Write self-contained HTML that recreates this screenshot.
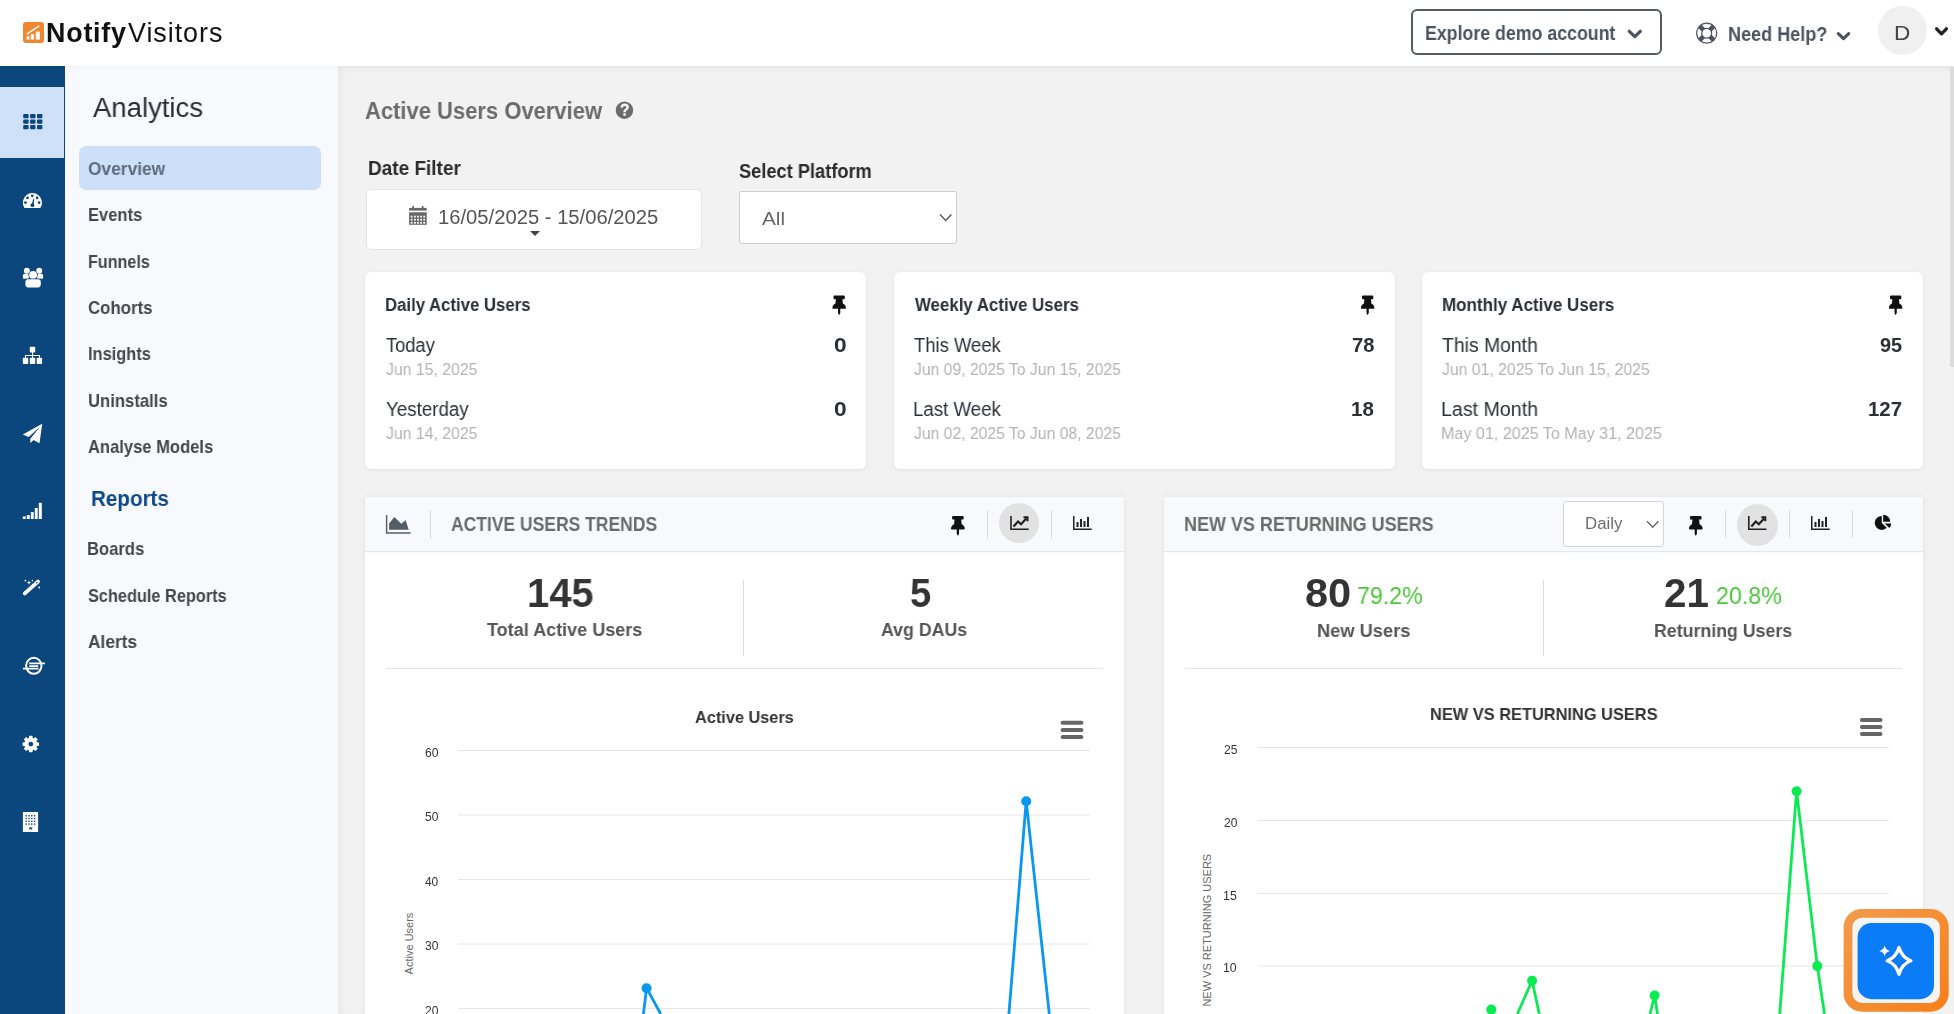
<!DOCTYPE html>
<html><head><meta charset="utf-8"><title>NotifyVisitors - Analytics</title>
<style>
*{margin:0;padding:0;box-sizing:border-box}
html,body{width:1954px;height:1014px;overflow:hidden;background:#f2f2f2;font-family:"Liberation Sans",sans-serif}
.t{position:absolute;z-index:5;will-change:transform;white-space:nowrap;transform-origin:0 0;display:inline-block}
.a{position:absolute}
#header{left:0;top:0;width:1954px;height:66px;background:#fff;z-index:2;box-shadow:0 1px 3px rgba(0,0,0,0.03)}
#sidebar{left:0;top:66px;width:65px;height:948px;background:#0b467d}
#sideactive{left:0;top:87px;width:64px;height:71px;background:#cfe0f9}
#submenu{left:65px;top:66px;width:273px;height:948px;background:#f8f9fc}
#main{left:338px;top:66px;width:1616px;height:948px;background:#f2f2f2;box-shadow:inset 3px 4px 7px rgba(0,0,0,0.04)}
#overviewbg{left:79px;top:146px;width:242px;height:44px;background:#cde0fa;border-radius:7px}
.card{position:absolute;background:#fff;border-radius:6px;box-shadow:0 1px 4px rgba(0,0,0,0.07)}
.chhead{position:absolute;left:0;top:0;right:0;height:55px;background:#f7f9fc;border-bottom:1px solid #e4e7ec;box-shadow:0 1px 2px rgba(0,0,0,0.03)}
.vdiv{position:absolute;width:1px;background:#dcdcdc}
.hdiv{position:absolute;height:1px;background:#e6e6e6}
.grid{position:absolute;height:1px;background:#e6e6e6}

</style></head><body>
<div class="a" id="header"></div>
<div class="a" id="sidebar"></div>
<div class="a" id="sideactive"></div>
<div class="a" id="submenu"></div>
<div class="a" id="main"></div>
<div class="a" id="overviewbg"></div>
<!-- explore button -->
<div class="a" style="left:1411px;top:9px;width:251px;height:46px;border:2px solid #555a63;border-radius:6px;background:#fff;z-index:3"></div>
<div class="a" style="left:1878px;top:6px;width:49px;height:49px;border-radius:50%;background:#f0f0f0;z-index:3"></div>
<!-- date box -->
<div class="a" style="left:366px;top:189px;width:336px;height:61px;background:#fff;border-radius:5px;border:1px solid #e4e4e4"></div>
<div class="a" style="left:739px;top:191px;width:218px;height:53px;background:#fff;border:1px solid #cfcfcf;border-radius:2px"></div>
<!-- KPI cards -->
<div class="card" style="left:365px;top:272px;width:501px;height:197px"></div>
<div class="card" style="left:893.5px;top:272px;width:501px;height:197px"></div>
<div class="card" style="left:1421.5px;top:272px;width:501px;height:197px"></div>
<!-- chart card 1 -->
<div class="card" style="left:364.5px;top:496.5px;width:759.5px;height:560px;border-radius:0;box-shadow:0 0 6px rgba(0,0,0,0.07)">
  <div class="chhead"></div>
</div>
<div class="vdiv" style="left:430px;top:510px;height:29px"></div>
<div class="vdiv" style="left:987px;top:510px;height:29px"></div>
<div class="a" style="left:999px;top:503px;width:40px;height:40px;border-radius:50%;background:#e2e2e2"></div>
<div class="vdiv" style="left:1051px;top:510px;height:29px"></div>
<div class="vdiv" style="left:743px;top:580px;height:76px"></div>
<div class="hdiv" style="left:386px;top:668px;width:717px"></div>
<!-- chart card 2 -->
<div class="card" style="left:1164.2px;top:496.5px;width:759.3px;height:560px;border-radius:0;box-shadow:0 0 6px rgba(0,0,0,0.07)">
  <div class="chhead"></div>
</div>
<div class="a" style="left:1562.5px;top:501px;width:101.5px;height:45.5px;border:1px solid #d4d4d4;border-radius:3px;background:#fff"></div>
<div class="vdiv" style="left:1725px;top:510px;height:28px"></div>
<div class="a" style="left:1737px;top:504px;width:41px;height:42px;border-radius:50%;background:#e2e2e2"></div>
<div class="vdiv" style="left:1789px;top:510px;height:28px"></div>
<div class="vdiv" style="left:1852px;top:510px;height:28px"></div>
<div class="vdiv" style="left:1543px;top:580px;height:76px"></div>
<div class="hdiv" style="left:1185px;top:668px;width:717px"></div>
<!-- scrollbar -->
<div class="a" style="left:1950px;top:67px;width:4px;height:300px;background:#dcdcdc;z-index:3"></div>

<svg class="a" style="left:0;top:0;z-index:4;pointer-events:none" width="1954" height="1014" viewBox="0 0 1954 1014">
<!-- logo -->
<rect x="23" y="22" width="21" height="21" rx="3" fill="#f0862f"/>
<rect x="26.6" y="36.2" width="2.8" height="3.4" fill="#fff"/>
<rect x="30.8" y="34.2" width="3.3" height="5.4" fill="#fff"/>
<rect x="35.8" y="31.6" width="4" height="8" fill="#fff"/>
<path d="M26.8 34.2 L39.2 25.8" stroke="#fff" stroke-width="1.5" fill="none"/>
<!-- header chevrons -->
<path d="M1629.3 31.3 L1634.8 36.6 L1640.3 31.3" stroke="#4b5360" stroke-width="3.2" fill="none" stroke-linecap="round" stroke-linejoin="round"/>
<path d="M1838.3 33.6 L1843.5 38.6 L1848.7 33.6" stroke="#4b5360" stroke-width="3.2" fill="none" stroke-linecap="round" stroke-linejoin="round"/>
<path d="M1936.6 28.8 L1941.5 33.8 L1946.4 28.8" stroke="#222" stroke-width="3.3" fill="none" stroke-linecap="round" stroke-linejoin="round"/>
<!-- lifebuoy -->
<g transform="translate(1706.7 33.2)">
<circle r="10.6" fill="#4b5360"/>
<circle r="9.4" fill="#fff"/>
<path d="M-7 -7 L7 7 M-7 7 L7 -7" stroke="#4b5360" stroke-width="4.6"/>
<circle r="5.5" fill="#4b5360"/>
<circle r="4.3" fill="#fff"/>
</g>
<!-- sidebar icons -->
<g fill="#0b467d">
<rect x="23.2" y="114" width="5.4" height="4.2" rx="1"/><rect x="30.1" y="114" width="5.4" height="4.2" rx="1"/><rect x="37" y="114" width="5.4" height="4.2" rx="1"/>
<rect x="23.2" y="119.5" width="5.4" height="4.2" rx="1"/><rect x="30.1" y="119.5" width="5.4" height="4.2" rx="1"/><rect x="37" y="119.5" width="5.4" height="4.2" rx="1"/>
<rect x="23.2" y="125" width="5.4" height="4.2" rx="1"/><rect x="30.1" y="125" width="5.4" height="4.2" rx="1"/><rect x="37" y="125" width="5.4" height="4.2" rx="1"/>
</g>
<g fill="#fff">
<!-- gauge -->
<path d="M24.5 208.1 A9.6 9.6 0 1 1 40.3 208.1 Z"/>
<g fill="#0b467d"><circle cx="25.5" cy="202.6" r="1.35"/><circle cx="27.5" cy="197.9" r="1.35"/><circle cx="32.2" cy="195.8" r="1.35"/><circle cx="37.1" cy="197.9" r="1.35"/><circle cx="39.1" cy="202.6" r="1.35"/>
<path d="M31.6 205 L33.2 199 L34.3 199.3 L33.4 205.4 Z"/><circle cx="32.4" cy="205.2" r="1.9"/></g>
<!-- users -->
<circle cx="26.9" cy="270.7" r="3"/><circle cx="39.2" cy="270.7" r="3"/>
<rect x="22.9" y="273.8" width="6" height="5.2" rx="1.6"/><rect x="37.1" y="273.8" width="6" height="5.2" rx="1.6"/>
<circle cx="33.1" cy="275" r="4.6" fill="#0b467d"/><circle cx="33.1" cy="275" r="3.9"/>
<rect x="24.6" y="278.6" width="17" height="9.6" rx="0" fill="#0b467d"/>
<rect x="25.4" y="279.3" width="15.4" height="8.1" rx="2.8"/>
<!-- sitemap -->
<rect x="29.8" y="346.8" width="5.4" height="5.8" rx="0.8"/>
<rect x="22.8" y="357.8" width="5.4" height="6.3" rx="0.8"/><rect x="29.8" y="357.8" width="5.4" height="6.3" rx="0.8"/><rect x="36.7" y="357.8" width="5.4" height="6.3" rx="0.8"/>
<rect x="32" y="352" width="1" height="6"/><rect x="25" y="355" width="15" height="1"/><rect x="25" y="355" width="1" height="3"/><rect x="39" y="355" width="1" height="3"/>
<!-- paper plane -->
<path d="M22.8 434.5 L42.2 423.8 L39.5 443.2 L33.5 440 L30.5 443 L30.2 439 L40.2 426.5 L28.8 437 Z"/>
<!-- signal bars -->
<rect x="22.8" y="516.4" width="2.9" height="2.6"/><rect x="26.8" y="515.1" width="2.9" height="3.9"/><rect x="30.8" y="512.1" width="2.9" height="6.9"/><rect x="34.8" y="508" width="2.9" height="11"/><rect x="38.8" y="502.8" width="3" height="16.2"/>
<!-- magic wand -->
<path d="M24.8 593.4 L38 581.6" stroke="#fff" stroke-width="3.8" stroke-linecap="round"/>
<path d="M36.3 583.2 L37.5 582.1" stroke="#0b467d" stroke-width="1.2"/>
<circle cx="25.4" cy="580.6" r="0.9"/><circle cx="32.4" cy="580.6" r="0.8"/><circle cx="39.2" cy="587.5" r="0.9"/>
<path d="M29 580.6 L29.6 582.1 L31.1 582.7 L29.6 583.3 L29 584.8 L28.4 583.3 L26.9 582.7 L28.4 582.1 Z"/>
<!-- gear -->
<path d="M36.71 741.65 L36.91 742.21 L39.03 742.43 L39.03 745.77 L36.91 745.99 L36.71 746.55 L36.46 747.09 L37.80 748.74 L35.44 751.10 L33.79 749.76 L33.25 750.01 L32.69 750.21 L32.47 752.33 L29.13 752.33 L28.91 750.21 L28.35 750.01 L27.81 749.76 L26.16 751.10 L23.80 748.74 L25.14 747.09 L24.89 746.55 L24.69 745.99 L22.57 745.77 L22.57 742.43 L24.69 742.21 L24.89 741.65 L25.14 741.11 L23.80 739.46 L26.16 737.10 L27.81 738.44 L28.35 738.19 L28.91 737.99 L29.13 735.87 L32.47 735.87 L32.69 737.99 L33.25 738.19 L33.79 738.44 L35.44 737.10 L37.80 739.46 L36.46 741.11 Z"/>
<circle cx="30.8" cy="744.1" r="2.4" fill="#0b467d"/>
<!-- building -->
<rect x="22.9" y="812" width="15.2" height="20"/>
<g fill="#0b467d"><rect x="25.5" y="815.0" width="1.4" height="1.4"/><rect x="25.5" y="817.8" width="1.4" height="1.4"/><rect x="25.5" y="820.6" width="1.4" height="1.4"/><rect x="25.5" y="823.4" width="1.4" height="1.4"/><rect x="28.3" y="815.0" width="1.4" height="1.4"/><rect x="28.3" y="817.8" width="1.4" height="1.4"/><rect x="28.3" y="820.6" width="1.4" height="1.4"/><rect x="28.3" y="823.4" width="1.4" height="1.4"/><rect x="31.1" y="815.0" width="1.4" height="1.4"/><rect x="31.1" y="817.8" width="1.4" height="1.4"/><rect x="31.1" y="820.6" width="1.4" height="1.4"/><rect x="31.1" y="823.4" width="1.4" height="1.4"/><rect x="33.9" y="815.0" width="1.4" height="1.4"/><rect x="33.9" y="817.8" width="1.4" height="1.4"/><rect x="33.9" y="820.6" width="1.4" height="1.4"/><rect x="33.9" y="823.4" width="1.4" height="1.4"/>
<rect x="29.2" y="827.4" width="3" height="2"/>
</g>
</g>
<!-- globe/ring icon -->
<g fill="none" stroke="#fff">
<ellipse cx="33.8" cy="665.8" rx="7.7" ry="8" stroke-width="2"/>
<path d="M29.1 663.3 H44.9 M29.3 666.1 H38.2 M22.9 668.6 H38.5" stroke-width="1.7"/>
</g>
<!-- help icon -->
<circle cx="624.45" cy="110.2" r="8.7" fill="#6b6b6b"/>
<path d="M621.6 107.6 Q621.9 104.8 624.7 104.8 Q627.6 104.8 627.6 107.3 Q627.6 109 625.6 110 Q624.6 110.6 624.6 112.2" fill="none" stroke="#f2f2f2" stroke-width="2.5"/>
<rect x="623.3" y="113.3" width="2.6" height="2.4" fill="#f2f2f2"/>
<!-- calendar -->
<g fill="#666">
<rect x="409.1" y="207.9" width="17.6" height="2.7"/>
<rect x="412.3" y="206" width="1.7" height="2.5"/><rect x="421.8" y="206" width="1.7" height="2.5"/>
<rect x="409.1" y="212.3" width="17.6" height="12.5"/>
</g>
<g fill="#fff"><rect x="410.7" y="215.7" width="1.8" height="1.8"/><rect x="410.7" y="218.8" width="1.8" height="1.8"/><rect x="410.7" y="221.9" width="1.8" height="1.8"/><rect x="414.0" y="215.7" width="1.8" height="1.8"/><rect x="414.0" y="218.8" width="1.8" height="1.8"/><rect x="414.0" y="221.9" width="1.8" height="1.8"/><rect x="417.1" y="215.7" width="1.8" height="1.8"/><rect x="417.1" y="218.8" width="1.8" height="1.8"/><rect x="417.1" y="221.9" width="1.8" height="1.8"/><rect x="420.2" y="215.7" width="1.8" height="1.8"/><rect x="420.2" y="218.8" width="1.8" height="1.8"/><rect x="420.2" y="221.9" width="1.8" height="1.8"/><rect x="423.3" y="215.7" width="1.8" height="1.8"/><rect x="423.3" y="218.8" width="1.8" height="1.8"/><rect x="423.3" y="221.9" width="1.8" height="1.8"/></g>
<path d="M530 231 L540 231 L535 236 Z" fill="#444"/>
<path d="M940 214.5 L945.7 220.5 L951.4 214.5" stroke="#555" stroke-width="1.4" fill="none"/>
<path d="M1647 521.2 L1652.7 527.3 L1658.4 521.2" stroke="#666" stroke-width="1.4" fill="none"/>
<!-- pins -->
<defs>
<path id="pin" d="M298.028 214.267L285.793 96H328c13.255 0 24-10.745 24-24V24c0-13.255-10.745-24-24-24H56C42.745 0 32 10.745 32 24v48c0 13.255 10.745 24 24 24h42.207L85.972 214.267C37.465 236.82 0 277.261 0 328c0 13.255 10.745 24 24 24h136v104.007c0 1.242.289 2.467.845 3.578l24 48c2.941 5.882 11.364 5.893 14.311 0l24-48a8.008 8.008 0 0 0 .845-3.578V352h136c13.255 0 24-10.745 24-24-.001-51.183-37.983-91.42-85.973-113.733z"/>
</defs>
<g fill="#111">
<use href="#pin" transform="translate(832.4 295.5) scale(0.0352 0.0379)"/>
<use href="#pin" transform="translate(1360.9 295.5) scale(0.0352 0.0379)"/>
<use href="#pin" transform="translate(1888.9 295.5) scale(0.0352 0.0379)"/>
<use href="#pin" transform="translate(951 515.9) scale(0.0359 0.0387)"/>
<use href="#pin" transform="translate(1688.9 515.9) scale(0.0359 0.0387)"/>
</g>
<!-- area chart icon -->
<g fill="#555d68">
<path d="M385.9 515.1 L387.3 515.1 L387.3 532.2 L410.6 532.2 L410.6 533.7 L385.9 533.7 Z"/>
<path d="M389.1 529.8 L389.1 523.5 L394.4 517 L401.3 523.8 L405.6 520.1 L408.7 529.8 Z"/>
</g>
<!-- line chart icons -->
<g id="lc" fill="none" stroke="#222">
<path d="M1011 516 L1011 529.3 L1028.7 529.3" stroke-width="1.6"/>
<path d="M1013.5 526.5 L1018 521.5 L1021 524.2 L1026.5 518.3" stroke-width="2.2"/>
<path d="M1023.5 517.2 L1027.5 517.2 L1027.5 521.2" stroke-width="2"/>
</g>
<use href="#lc" transform="translate(737.8 0)"/>
<!-- bar chart icons -->
<g id="bc" fill="#222">
<path d="M1073 516 L1074.5 516 L1074.5 528.5 L1091.7 528.5 L1091.7 530 L1073 530 Z"/>
<rect x="1076.5" y="522" width="2" height="5"/><rect x="1080" y="519" width="2" height="8"/><rect x="1083.5" y="521" width="2" height="6"/><rect x="1087" y="517" width="2" height="10"/>
</g>
<use href="#bc" transform="translate(738 0)"/>
<!-- pie -->
<g fill="#111">
<path d="M1881.8 522.9 L1881.8 515.9 A7 7 0 1 0 1886.75 527.85 Z"/>
<path d="M1883.2 521.7 L1883.2 514.7 A7 7 0 0 1 1890.2 521.7 Z"/>
<path d="M1884.6 523.4 L1891.2 523.4 A6.6 6.6 0 0 1 1889.3 528.1 Z"/>
</g>
<!-- hamburgers -->
<g fill="#666">
<rect x="1060.6" y="720.7" width="22.8" height="4" rx="2"/><rect x="1060.6" y="727.9" width="22.8" height="4" rx="2"/><rect x="1060.6" y="735" width="22.8" height="4" rx="2"/>
<rect x="1859.9" y="718" width="22.6" height="4" rx="2"/><rect x="1859.9" y="725" width="22.6" height="4" rx="2"/><rect x="1859.9" y="732" width="22.6" height="4" rx="2"/>
</g>
<!-- chart 1 grid -->
<g stroke="#e6e6e6" stroke-width="1">
<path d="M458 750.5 H1090 M458 815 H1090 M458 879.5 H1090 M458 944 H1090 M458 1008.5 H1090"/>
<path d="M1257.5 747.5 H1889 M1257.5 820.5 H1889 M1257.5 893.5 H1889 M1257.5 966 H1889"/>
</g>
<text transform="translate(412.5 943.5) rotate(-90)" font-family="Liberation Sans" font-size="11" fill="#666" text-anchor="middle">Active Users</text>
<text transform="translate(1211 930.2) rotate(-90)" font-family="Liberation Sans" font-size="11" fill="#666" text-anchor="middle">NEW VS RETURNING USERS</text>
<!-- series 1 -->
<g stroke="#0898ee" stroke-width="2.8" fill="none" stroke-linejoin="round">
<path d="M643.4 1014 L646.6 988.2 L660.7 1014"/>
<path d="M1008.9 1014 L1026.2 801.2 L1049.3 1014"/>
</g>
<g fill="#0898ee"><circle cx="646.6" cy="988.2" r="5"/><circle cx="1026.2" cy="801.2" r="5"/></g>
<!-- series 2 -->
<g stroke="#0aea52" stroke-width="2.8" fill="none" stroke-linejoin="round">
<path d="M1517.3 1014 L1532.1 980.7 L1539.3 1014"/>
<path d="M1650 1014 L1654.6 995.5 L1657.5 1014"/>
<path d="M1779.7 1014 L1796.6 791.2 L1817.3 966.1 L1824.5 1014"/>
</g>
<g fill="#0aea52"><circle cx="1491.3" cy="1009.6" r="5"/><circle cx="1532.1" cy="980.7" r="5"/><circle cx="1654.6" cy="995.5" r="5"/><circle cx="1796.6" cy="791.2" r="5"/><circle cx="1817.3" cy="966.1" r="5"/></g>
<!-- AI button -->
<defs>
<linearGradient id="og" x1="0" y1="0" x2="1" y2="1"><stop offset="0" stop-color="#f39a4c"/><stop offset="1" stop-color="#f7801a"/></linearGradient>
</defs>
<rect x="1848" y="913.3" width="96.3" height="94" rx="14" fill="#f4f4f4" stroke="url(#og)" stroke-width="8.8"/>
<rect x="1857.6" y="923" width="76.4" height="76.2" rx="14" fill="#0b7cf7"/>
<path d="M1899 947.5 Q1902 957.5 1910.8 960.8 Q1902 964 1899 974.2 Q1896 964 1887.2 960.8 Q1896 957.5 1899 947.5 Z" fill="none" stroke="#fff" stroke-width="3.3" stroke-linejoin="round"/>
<path d="M1884.6 945.6 Q1885.5 950.1 1890 951 Q1885.5 951.9 1884.6 956.4 Q1883.7 951.9 1879.2 951 Q1883.7 950.1 1884.6 945.6 Z" fill="#fff"/>
</svg>

<span class="t" id="logo1" style="left:45.90px;top:19.84px;font-size:26.89px;line-height:26.89px;font-weight:700;color:#111;transform:scaleX(1.0000);letter-spacing:0.781px;">Notify</span>
<span class="t" id="logo2" style="left:128.18px;top:19.84px;font-size:26.89px;line-height:26.89px;font-weight:400;color:#111;transform:scaleX(1.0000);letter-spacing:0.966px;">Visitors</span>
<span class="t" id="explore" style="left:1424.81px;top:23.74px;font-size:19.91px;line-height:19.91px;font-weight:700;color:#4b5360;transform:scaleX(0.8918);letter-spacing:0.000px;">Explore demo account</span>
<span class="t" id="help" style="left:1727.79px;top:25.09px;font-size:19.62px;line-height:19.62px;font-weight:700;color:#4b5360;transform:scaleX(0.9200);letter-spacing:0.000px;">Need Help?</span>
<span class="t" id="avatarD" style="left:1894.15px;top:21.56px;font-size:21.08px;line-height:21.08px;font-weight:400;color:#444;transform:scaleX(1.0723);letter-spacing:0.000px;">D</span>
<span class="t" id="analytics" style="left:92.95px;top:92.73px;font-size:28.20px;line-height:28.20px;font-weight:400;color:#2b2f33;transform:scaleX(0.9756);letter-spacing:0.000px;">Analytics</span>
<span class="t" id="m0" style="left:88.19px;top:159.82px;font-size:18.17px;line-height:18.17px;font-weight:700;color:#5f6b7a;transform:scaleX(0.9558);letter-spacing:0.000px;">Overview</span>
<span class="t" id="m1" style="left:87.79px;top:206.19px;font-size:18.17px;line-height:18.17px;font-weight:700;color:#44474b;transform:scaleX(0.9099);letter-spacing:0.000px;">Events</span>
<span class="t" id="m2" style="left:87.82px;top:252.56px;font-size:18.17px;line-height:18.17px;font-weight:700;color:#44474b;transform:scaleX(0.8884);letter-spacing:0.000px;">Funnels</span>
<span class="t" id="m3" style="left:88.21px;top:298.93px;font-size:18.17px;line-height:18.17px;font-weight:700;color:#44474b;transform:scaleX(0.9265);letter-spacing:0.000px;">Cohorts</span>
<span class="t" id="m4" style="left:87.80px;top:345.30px;font-size:18.17px;line-height:18.17px;font-weight:700;color:#44474b;transform:scaleX(0.9032);letter-spacing:0.000px;">Insights</span>
<span class="t" id="m5" style="left:87.90px;top:391.67px;font-size:18.17px;line-height:18.17px;font-weight:700;color:#44474b;transform:scaleX(0.9184);letter-spacing:0.000px;">Uninstalls</span>
<span class="t" id="m6" style="left:88.49px;top:438.04px;font-size:18.17px;line-height:18.17px;font-weight:700;color:#44474b;transform:scaleX(0.9123);letter-spacing:0.000px;">Analyse Models</span>
<span class="t" id="reports" style="left:90.82px;top:487.26px;font-size:22.97px;line-height:22.97px;font-weight:700;color:#0d4a85;transform:scaleX(0.8978);letter-spacing:0.000px;">Reports</span>
<span class="t" id="r0" style="left:87.39px;top:540.32px;font-size:18.17px;line-height:18.17px;font-weight:700;color:#44474b;transform:scaleX(0.9158);letter-spacing:0.000px;">Boards</span>
<span class="t" id="r1" style="left:88.03px;top:586.72px;font-size:18.17px;line-height:18.17px;font-weight:700;color:#44474b;transform:scaleX(0.8981);letter-spacing:0.000px;">Schedule Reports</span>
<span class="t" id="r2" style="left:88.07px;top:633.07px;font-size:18.17px;line-height:18.17px;font-weight:700;color:#44474b;transform:scaleX(0.9548);letter-spacing:0.000px;">Alerts</span>
<span class="t" id="title" style="left:364.75px;top:99.18px;font-size:24.13px;line-height:24.13px;font-weight:700;color:#6b6b6b;transform:scaleX(0.9110);letter-spacing:0.000px;">Active Users Overview</span>
<span class="t" id="datefilter" style="left:368.43px;top:158.66px;font-size:19.84px;line-height:19.84px;font-weight:700;color:#2b2b2b;transform:scaleX(0.9576);letter-spacing:0.000px;">Date Filter</span>
<span class="t" id="selplat" style="left:738.77px;top:161.84px;font-size:19.62px;line-height:19.62px;font-weight:700;color:#2b2b2b;transform:scaleX(0.9299);letter-spacing:0.000px;">Select Platform</span>
<span class="t" id="daterange" style="left:438.16px;top:207.74px;font-size:19.91px;line-height:19.91px;font-weight:400;color:#555;transform:scaleX(1.0154);letter-spacing:0.000px;">16/05/2025 - 15/06/2025</span>
<span class="t" id="all" style="left:761.96px;top:209.87px;font-size:18.46px;line-height:18.46px;font-weight:400;color:#666;transform:scaleX(1.1233);letter-spacing:0.000px;">All</span>
<span class="t" id="c0h" style="left:385.18px;top:295.93px;font-size:18.75px;line-height:18.75px;font-weight:700;color:#2b2f36;transform:scaleX(0.8930);letter-spacing:0.000px;">Daily Active Users</span>
<span class="t" id="c0l1" style="left:385.89px;top:335.54px;font-size:19.91px;line-height:19.91px;font-weight:400;color:#2b2f36;transform:scaleX(0.9176);letter-spacing:0.000px;">Today</span>
<span class="t" id="c0v1" style="left:833.90px;top:335.54px;font-size:19.91px;line-height:19.91px;font-weight:700;color:#2b2f36;transform:scaleX(1.1400);letter-spacing:0.000px;">0</span>
<span class="t" id="c0d1" style="left:386.05px;top:362.33px;font-size:16.86px;line-height:16.86px;font-weight:400;color:#b3b3b3;transform:scaleX(0.9386);letter-spacing:0.000px;">Jun 15, 2025</span>
<span class="t" id="c0l2" style="left:385.89px;top:399.64px;font-size:19.91px;line-height:19.91px;font-weight:400;color:#2b2f36;transform:scaleX(0.9423);letter-spacing:0.000px;">Yesterday</span>
<span class="t" id="c0v2" style="left:833.90px;top:399.64px;font-size:19.91px;line-height:19.91px;font-weight:700;color:#2b2f36;transform:scaleX(1.1400);letter-spacing:0.000px;">0</span>
<span class="t" id="c0d2" style="left:386.05px;top:426.43px;font-size:16.86px;line-height:16.86px;font-weight:400;color:#b3b3b3;transform:scaleX(0.9386);letter-spacing:0.000px;">Jun 14, 2025</span>
<span class="t" id="c1h" style="left:914.68px;top:295.93px;font-size:18.75px;line-height:18.75px;font-weight:700;color:#2b2f36;transform:scaleX(0.8986);letter-spacing:0.000px;">Weekly Active Users</span>
<span class="t" id="c1l1" style="left:914.29px;top:335.54px;font-size:19.91px;line-height:19.91px;font-weight:400;color:#2b2f36;transform:scaleX(0.9254);letter-spacing:0.000px;">This Week</span>
<span class="t" id="c1v1" style="left:1351.84px;top:335.54px;font-size:19.91px;line-height:19.91px;font-weight:700;color:#2b2f36;transform:scaleX(1.0102);letter-spacing:0.000px;">78</span>
<span class="t" id="c1d1" style="left:914.45px;top:362.33px;font-size:16.86px;line-height:16.86px;font-weight:400;color:#b3b3b3;transform:scaleX(0.9326);letter-spacing:0.000px;">Jun 09, 2025 To Jun 15, 2025</span>
<span class="t" id="c1l2" style="left:913.17px;top:399.64px;font-size:19.91px;line-height:19.91px;font-weight:400;color:#2b2f36;transform:scaleX(0.9372);letter-spacing:0.000px;">Last Week</span>
<span class="t" id="c1v2" style="left:1351.41px;top:399.64px;font-size:19.91px;line-height:19.91px;font-weight:700;color:#2b2f36;transform:scaleX(1.0301);letter-spacing:0.000px;">18</span>
<span class="t" id="c1d2" style="left:914.45px;top:426.43px;font-size:16.86px;line-height:16.86px;font-weight:400;color:#b3b3b3;transform:scaleX(0.9326);letter-spacing:0.000px;">Jun 02, 2025 To Jun 08, 2025</span>
<span class="t" id="c2h" style="left:1441.56px;top:295.93px;font-size:18.75px;line-height:18.75px;font-weight:700;color:#2b2f36;transform:scaleX(0.9071);letter-spacing:0.000px;">Monthly Active Users</span>
<span class="t" id="c2l1" style="left:1442.26px;top:335.54px;font-size:19.91px;line-height:19.91px;font-weight:400;color:#2b2f36;transform:scaleX(0.9728);letter-spacing:0.000px;">This Month</span>
<span class="t" id="c2v1" style="left:1879.61px;top:335.54px;font-size:19.91px;line-height:19.91px;font-weight:700;color:#2b2f36;transform:scaleX(0.9994);letter-spacing:0.000px;">95</span>
<span class="t" id="c2d1" style="left:1442.45px;top:362.33px;font-size:16.86px;line-height:16.86px;font-weight:400;color:#b3b3b3;transform:scaleX(0.9362);letter-spacing:0.000px;">Jun 01, 2025 To Jun 15, 2025</span>
<span class="t" id="c2l2" style="left:1441.09px;top:399.64px;font-size:19.91px;line-height:19.91px;font-weight:400;color:#2b2f36;transform:scaleX(0.9847);letter-spacing:0.000px;">Last Month</span>
<span class="t" id="c2v2" style="left:1868.01px;top:399.64px;font-size:19.91px;line-height:19.91px;font-weight:700;color:#2b2f36;transform:scaleX(1.0261);letter-spacing:0.000px;">127</span>
<span class="t" id="c2d2" style="left:1441.38px;top:426.43px;font-size:16.86px;line-height:16.86px;font-weight:400;color:#b3b3b3;transform:scaleX(0.9554);letter-spacing:0.000px;">May 01, 2025 To May 31, 2025</span>
<span class="t" id="ch1t" style="left:450.56px;top:514.89px;font-size:19.62px;line-height:19.62px;font-weight:700;color:#6b6b6b;transform:scaleX(0.8923);letter-spacing:0.000px;">ACTIVE USERS TRENDS</span>
<span class="t" id="k145" style="left:527.18px;top:574.42px;font-size:40.26px;line-height:40.26px;font-weight:700;color:#333;transform:scaleX(0.9921);letter-spacing:0.000px;">145</span>
<span class="t" id="ktau" style="left:486.80px;top:621.43px;font-size:18.75px;line-height:18.75px;font-weight:700;color:#555;transform:scaleX(0.9617);letter-spacing:0.000px;">Total Active Users</span>
<span class="t" id="k5" style="left:909.83px;top:574.42px;font-size:40.26px;line-height:40.26px;font-weight:700;color:#333;transform:scaleX(0.9485);letter-spacing:0.000px;">5</span>
<span class="t" id="kavg" style="left:880.56px;top:621.43px;font-size:18.75px;line-height:18.75px;font-weight:700;color:#555;transform:scaleX(0.9469);letter-spacing:0.000px;">Avg DAUs</span>
<span class="t" id="hc1t" style="left:694.89px;top:708.88px;font-size:17.15px;line-height:17.15px;font-weight:700;color:#333;transform:scaleX(0.9510);letter-spacing:0.000px;">Active Users</span>
<span class="t" id="y1_0" style="left:424.68px;top:747.51px;font-size:11.92px;line-height:11.92px;font-weight:400;color:#333;transform:scaleX(1.0181);letter-spacing:0.000px;">60</span>
<span class="t" id="y1_1" style="left:424.82px;top:812.06px;font-size:11.92px;line-height:11.92px;font-weight:400;color:#333;transform:scaleX(1.0075);letter-spacing:0.000px;">50</span>
<span class="t" id="y1_2" style="left:425.03px;top:876.61px;font-size:11.92px;line-height:11.92px;font-weight:400;color:#333;transform:scaleX(0.9911);letter-spacing:0.000px;">40</span>
<span class="t" id="y1_3" style="left:424.84px;top:941.16px;font-size:11.92px;line-height:11.92px;font-weight:400;color:#333;transform:scaleX(1.0056);letter-spacing:0.000px;">30</span>
<span class="t" id="y1_4" style="left:424.69px;top:1005.71px;font-size:11.92px;line-height:11.92px;font-weight:400;color:#333;transform:scaleX(1.0176);letter-spacing:0.000px;">20</span>
<span class="t" id="ch2t" style="left:1183.80px;top:514.89px;font-size:19.62px;line-height:19.62px;font-weight:700;color:#6b6b6b;transform:scaleX(0.9164);letter-spacing:0.000px;">NEW VS RETURNING USERS</span>
<span class="t" id="daily" style="left:1584.62px;top:516.07px;font-size:16.57px;line-height:16.57px;font-weight:400;color:#6d6d6d;transform:scaleX(1.0159);letter-spacing:0.000px;">Daily</span>
<span class="t" id="k80" style="left:1305.08px;top:574.42px;font-size:40.26px;line-height:40.26px;font-weight:700;color:#333;transform:scaleX(1.0322);letter-spacing:0.000px;">80</span>
<span class="t" id="k79" style="left:1356.61px;top:583.88px;font-size:24.71px;line-height:24.71px;font-weight:400;color:#4cc73a;transform:scaleX(0.9396);letter-spacing:0.000px;">79.2%</span>
<span class="t" id="knew" style="left:1316.68px;top:621.53px;font-size:18.75px;line-height:18.75px;font-weight:700;color:#555;transform:scaleX(0.9737);letter-spacing:0.000px;">New Users</span>
<span class="t" id="k21" style="left:1663.80px;top:574.42px;font-size:40.26px;line-height:40.26px;font-weight:700;color:#333;transform:scaleX(1.0032);letter-spacing:0.000px;">21</span>
<span class="t" id="k20" style="left:1715.83px;top:583.88px;font-size:24.71px;line-height:24.71px;font-weight:400;color:#4cc73a;transform:scaleX(0.9408);letter-spacing:0.000px;">20.8%</span>
<span class="t" id="kret" style="left:1653.81px;top:621.53px;font-size:18.75px;line-height:18.75px;font-weight:700;color:#555;transform:scaleX(0.9468);letter-spacing:0.000px;">Returning Users</span>
<span class="t" id="hc2t" style="left:1429.80px;top:706.28px;font-size:17.15px;line-height:17.15px;font-weight:700;color:#333;transform:scaleX(0.9557);letter-spacing:0.000px;">NEW VS RETURNING USERS</span>
<span class="t" id="y2_0" style="left:1223.79px;top:744.91px;font-size:11.92px;line-height:11.92px;font-weight:400;color:#333;transform:scaleX(1.0123);letter-spacing:0.000px;">25</span>
<span class="t" id="y2_1" style="left:1223.79px;top:817.76px;font-size:11.92px;line-height:11.92px;font-weight:400;color:#333;transform:scaleX(1.0094);letter-spacing:0.000px;">20</span>
<span class="t" id="y2_2" style="left:1223.46px;top:890.61px;font-size:11.92px;line-height:11.92px;font-weight:400;color:#333;transform:scaleX(1.0387);letter-spacing:0.000px;">15</span>
<span class="t" id="y2_3" style="left:1223.46px;top:963.46px;font-size:11.92px;line-height:11.92px;font-weight:400;color:#333;transform:scaleX(1.0357);letter-spacing:0.000px;">10</span>
</body></html>
